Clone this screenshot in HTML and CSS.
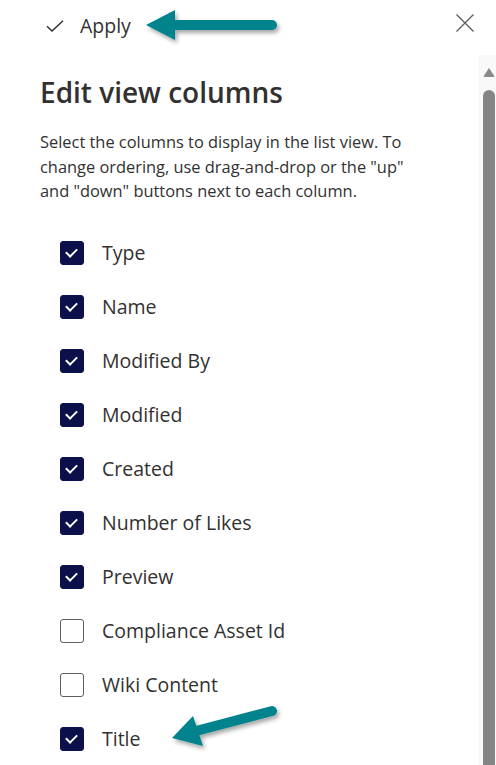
FILE: index.html
```html
<!DOCTYPE html>
<html lang="en">
<head>
<meta charset="utf-8">
<link rel="stylesheet" href="styles.css">
<title>Edit view columns</title>
</head>
<body>
<div class="panel">
  <header class="topbar">
    <button class="apply">
      <svg class="apply-icon" width="18" height="12" viewBox="0 0 18 12"><path d="M1 6.2 L6 11 L17 0.8" fill="none" stroke="#323130" stroke-width="1.5"/></svg>
      <span>Apply</span>
    </button>
    <button class="close" aria-label="Close">
      <svg width="18" height="18" viewBox="0 0 18 18"><path d="M0.5 0.5 L17.5 17.5 M17.5 0.5 L0.5 17.5" stroke="#605e5c" stroke-width="1.3" fill="none"/></svg>
    </button>
  </header>
  <div class="body">
    <main class="content">
      <h1 class="title">Edit view columns</h1>
      <p class="desc">Select the columns to display in the list view. To change ordering, use drag-and-drop or the "up" and "down" buttons next to each column.</p>
      <ul class="cols">
        <li class="col"><span class="box on"></span><span class="label">Type</span></li>
        <li class="col"><span class="box on"></span><span class="label">Name</span></li>
        <li class="col"><span class="box on"></span><span class="label">Modified By</span></li>
        <li class="col"><span class="box on"></span><span class="label">Modified</span></li>
        <li class="col"><span class="box on"></span><span class="label">Created</span></li>
        <li class="col"><span class="box on"></span><span class="label">Number of Likes</span></li>
        <li class="col"><span class="box on"></span><span class="label">Preview</span></li>
        <li class="col"><span class="box"></span><span class="label">Compliance Asset Id</span></li>
        <li class="col"><span class="box"></span><span class="label">Wiki Content</span></li>
        <li class="col"><span class="box on"></span><span class="label">Title</span></li>
      </ul>
    </main>
    <div class="scrollbar">
      <span class="sb-up"></span>
      <span class="sb-thumb"></span>
    </div>
  </div>
  <svg class="arrows" width="496" height="765" viewBox="0 0 496 765">
    <defs>
      <filter id="sh" x="-20%" y="-50%" width="140%" height="200%">
        <feDropShadow dx="2" dy="3" stdDeviation="2" flood-color="#000" flood-opacity="0.35"/>
      </filter>
    </defs>
    <g fill="#00838d" stroke="#00838d" filter="url(#sh)">
      <line x1="170" y1="25" x2="272" y2="25" stroke-width="10" stroke-linecap="round"/>
      <polygon points="146,25 175,10 175,40" stroke="none"/>
      <line x1="196" y1="731" x2="272" y2="711" stroke-width="10" stroke-linecap="round"/>
      <polygon points="172,738 193,716 203,746" stroke="none"/>
    </g>
  </svg>
</div>
</body>
</html>
```
FILE: styles.css
```css
* { box-sizing: border-box; }
html, body {
  margin: 0;
  padding: 0;
  background: #ffffff;
}
body {
  font-family: "Open Sans", "Noto Sans", "Liberation Sans", sans-serif;
  color: #323130;
  width: 496px;
  height: 765px;
  overflow: hidden;
}
.panel {
  position: relative;
  width: 496px;
  height: 765px;
  display: flex;
  flex-direction: column;
}
.topbar {
  height: 55px;
  display: flex;
  align-items: flex-start;
  justify-content: space-between;
  padding: 0 22px 0 46px;
  flex: none;
}
.apply {
  display: flex;
  align-items: center;
  gap: 16px;
  background: none;
  border: 0;
  padding: 0;
  margin-top: 10px;
  height: 30px;
  font: inherit;
  font-size: 19.5px;
  color: #323130;
}
.apply-icon { margin-top: 1px; }
.close {
  background: none;
  border: 0;
  padding: 0;
  margin-top: 14px;
  width: 18px;
  height: 18px;
  display: block;
}
.close svg { display: block; }
.body {
  flex: 1;
  display: flex;
  min-height: 0;
}
.content {
  flex: 1;
  padding: 0 0 0 40px;
}
.title {
  margin: 17px 0 0;
  font-size: 28px;
  font-weight: 600;
  line-height: 40px;
  color: #323130;
  letter-spacing: 0;
}
.desc {
  margin: 18px 0 0;
  font-size: 16.4px;
  line-height: 24.5px;
  color: #323130;
  width: 378px;
}
.cols {
  list-style: none;
  margin: 22px 0 0;
  padding: 0 0 0 20px;
}
.col {
  height: 54px;
  display: flex;
  align-items: center;
  gap: 18px;
}
.box {
  width: 24px;
  height: 24px;
  border-radius: 3px;
  border: 1.5px solid #605e5c;
  flex: none;
  position: relative;
  background: #fff;
}
.box.on {
  background: #0b0f4a;
  border-color: #0b0f4a;
}
.box.on::after {
  content: "";
  position: absolute;
  left: 6.5px;
  top: 4.5px;
  width: 5px;
  height: 9px;
  border: solid #fff;
  border-width: 0 2.5px 2.5px 0;
  transform: rotate(45deg);
}
.label {
  font-size: 19.5px;
  color: #323130;
  line-height: 26px;
}
.scrollbar {
  width: 18px;
  flex: none;
  background: #f9f9f9;
  display: flex;
  flex-direction: column;
  align-items: center;
  padding-top: 13px;
  padding-left: 3px;
}
.sb-up {
  width: 0;
  height: 0;
  border-left: 6px solid transparent;
  border-right: 6px solid transparent;
  border-bottom: 9px solid #8a8a8a;
  border-radius: 2px;
}
.sb-thumb {
  margin-top: 13px;
  width: 12px;
  flex: 1;
  background: #858585;
  border-radius: 6px 6px 0 0;
}
.arrows {
  position: absolute;
  left: 0;
  top: 0;
  pointer-events: none;
}
```
